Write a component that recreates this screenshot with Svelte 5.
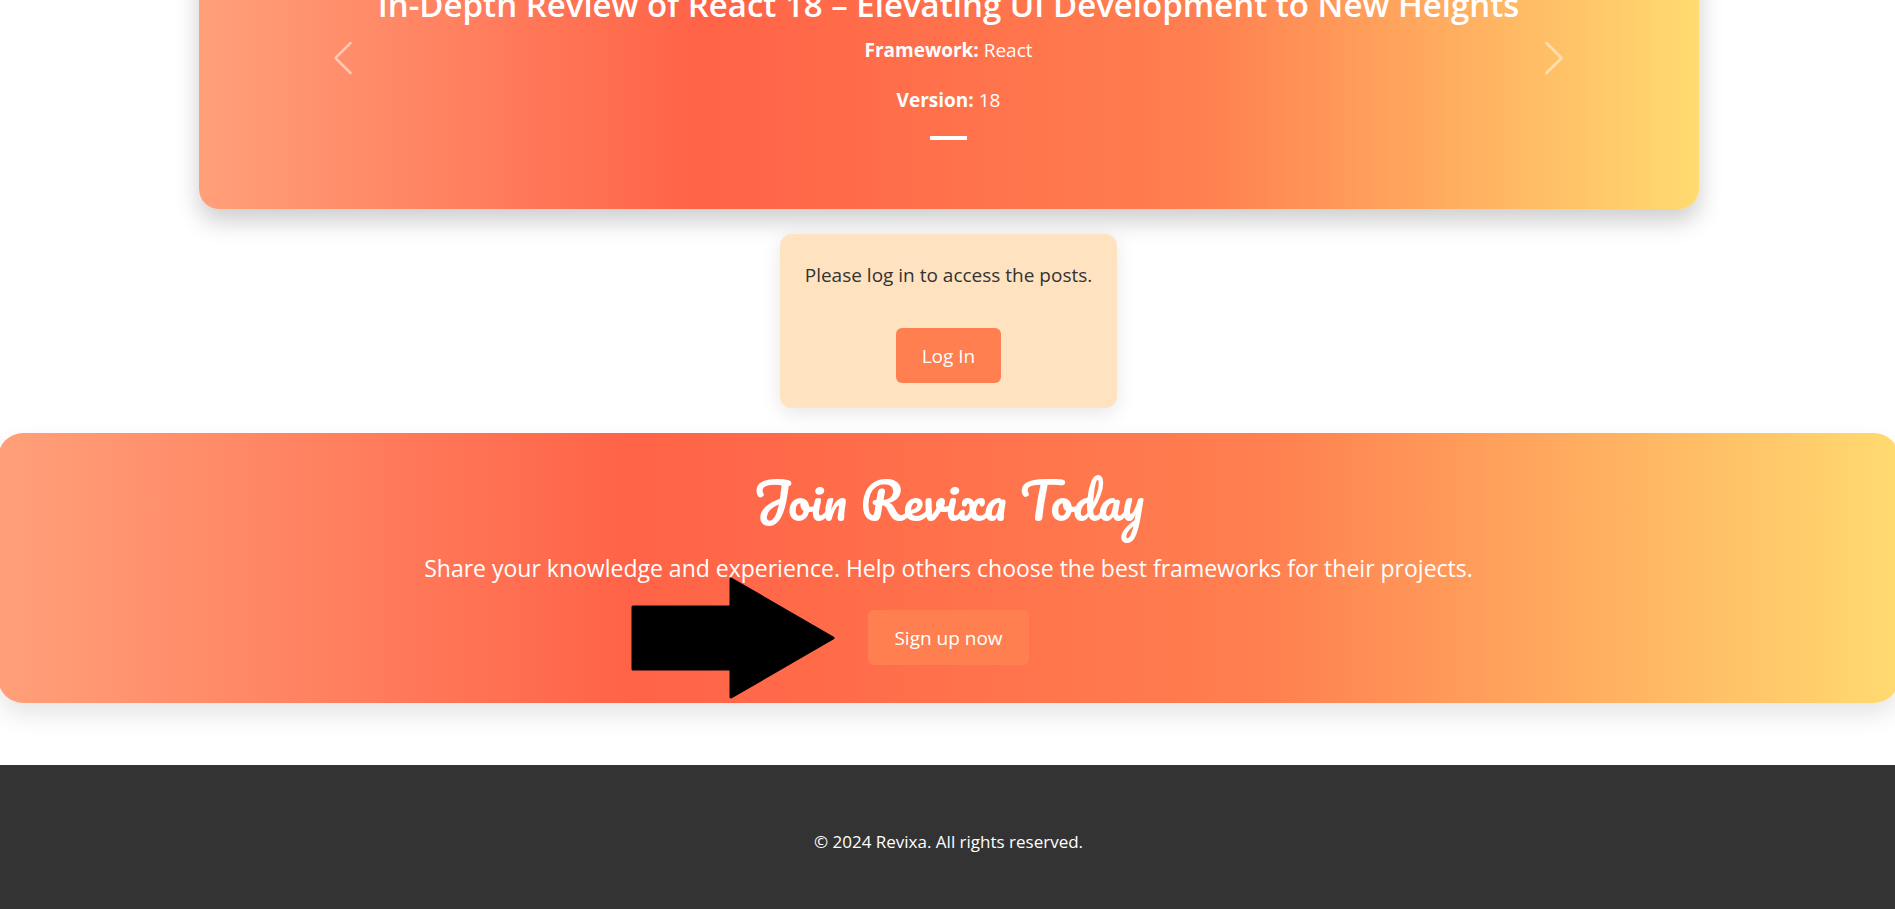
<script>
  const review = {
    title: 'In-Depth Review of React 18 – Elevating UI Development to New Heights',
    framework: 'React',
    version: '18'
  };
</script>

<div class="page">
  <main>
    <section class="review-card" aria-label="Featured reviews">
      <div class="carousel">
        <button class="control prev" type="button" aria-label="Previous">
          <svg viewBox="0 0 16 16" aria-hidden="true"><path d="M11.354 1.646a.5.5 0 0 1 0 .708L5.707 8l5.647 5.646a.5.5 0 0 1-.708.708l-6-6a.5.5 0 0 1 0-.708l6-6a.5.5 0 0 1 .708 0z" /></svg>
        </button>
        <h2>{review.title}</h2>
        <p><strong>Framework:</strong> {review.framework}</p>
        <p><strong>Version:</strong> {review.version}</p>
        <button class="indicator" type="button" aria-label="Slide 1"></button>
        <button class="control next" type="button" aria-label="Next">
          <svg viewBox="0 0 16 16" aria-hidden="true"><path d="M4.646 1.646a.5.5 0 0 1 .708 0l6 6a.5.5 0 0 1 0 .708l-6 6a.5.5 0 0 1-.708-.708L10.293 8 4.646 2.354a.5.5 0 0 1 0-.708z" /></svg>
        </button>
      </div>
    </section>

    <section class="login">
      <p>Please log in to access the posts.</p>
      <a class="button" href="#login">Log In</a>
    </section>

    <section class="join">
      <h1>Join Revixa Today</h1>
      <p>Share your knowledge and experience. Help others choose the best frameworks for their projects.</p>
      <div class="signup">
        <svg class="arrow" viewBox="0 0 204 122" aria-hidden="true"><path d="M2 30H100V2L202 61L100 120V92H2Z" /></svg>
        <a class="button" href="#signup">Sign up now</a>
      </div>
    </section>
  </main>

  <footer>
    <p>© 2024 Revixa. All rights reserved.</p>
  </footer>
</div>

<style>
  :global(body) {
    overflow: hidden;
    background: #fff;
  }

  .page {
    --sunset: linear-gradient(to right, #ffa07a, #ff6347, #ff7f50, #ffdb70);
    display: flex;
    flex-direction: column;
    min-height: 100vh;
    margin: 0 -4px 0 -2px;
    font-family: "Open Sans", "Noto Sans", sans-serif;
    font-size: 19px;
    line-height: 30px;
    color: #333;
    text-align: center;
  }

  main {
    display: flex;
    flex-direction: column;
    align-items: center;
  }

  h1,
  h2,
  p {
    margin: 0;
  }

  .review-card {
    box-sizing: border-box;
    width: 100%;
    max-width: 1500px;
    margin-top: -93px;
    padding: 38px;
    border-radius: 20px;
    background: var(--sunset);
    box-shadow: 0 12px 25px rgba(0, 0, 0, 0.2);
    color: #fff;
  }

  .carousel {
    position: relative;
    display: flex;
    flex-direction: column;
    align-items: center;
    padding: 39px 0 31px;
  }

  .carousel h2 {
    margin-bottom: 9px;
    font-size: 33px;
    font-weight: 600;
    line-height: 42px;
  }

  .carousel p + p {
    margin-top: 20px;
  }

  .indicator {
    width: 37px;
    height: 4px;
    margin-top: 21px;
    padding: 0;
    border: 0;
    background: #fff;
  }

  .control {
    position: absolute;
    top: 0;
    bottom: 0;
    display: flex;
    align-items: center;
    justify-content: center;
    width: 15%;
    padding: 0;
    border: 0;
    background: none;
    opacity: 0.5;
  }

  .control svg {
    width: 40px;
    height: 40px;
    fill: #fff;
  }

  .prev {
    left: 0;
  }

  .next {
    right: 0;
  }

  .login {
    display: flex;
    flex-direction: column;
    align-items: center;
    gap: 38px;
    margin: 25px 0;
    padding: 26px 25px 25px;
    border-radius: 12px;
    background: #ffe2c0;
    box-shadow: 0 5px 20px rgba(0, 0, 0, 0.1);
  }

  .button {
    display: inline-block;
    padding: 13px 26px 11px;
    border-radius: 6px;
    background: #ff7f50;
    color: #fff;
    line-height: 31px;
    text-decoration: none;
  }

  .join {
    display: flex;
    flex-direction: column;
    align-items: center;
    align-self: stretch;
    padding: 37px 38px 38px;
    border-radius: 25px;
    background: var(--sunset);
    box-shadow: 0 12px 25px rgba(0, 0, 0, 0.1);
    color: #fff;
  }

  .join h1 {
    margin-bottom: 20px;
    font-family: Pacifico, "Lobster", cursive;
    font-size: 50px;
    font-weight: 400;
    line-height: 60px;
  }

  .join p {
    margin-bottom: 24px;
    font-size: 23px;
    line-height: 36px;
  }

  .signup {
    position: relative;
  }

  .arrow {
    position: absolute;
    right: calc(100% + 33px);
    top: -33px;
    width: 204px;
    height: 122px;
    stroke: #000;
    stroke-width: 3px;
    stroke-linejoin: round;
  }

  footer {
    flex: 1;
    margin-top: 62px;
    padding: 62px 25px 37px;
    background: #333;
    color: #fff;
    font-size: 17px;
  }
</style>
